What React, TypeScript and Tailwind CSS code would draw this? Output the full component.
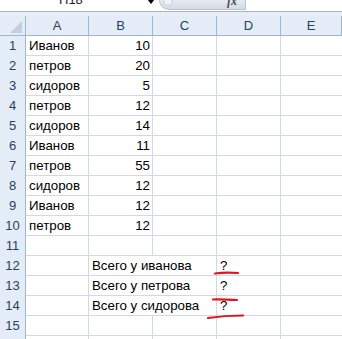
const rows: [string, string][] = [
  ["Иванов", "10"],
  ["петров", "20"],
  ["сидоров", "5"],
  ["петров", "12"],
  ["сидоров", "14"],
  ["Иванов", "11"],
  ["петров", "55"],
  ["сидоров", "12"],
  ["Иванов", "12"],
  ["петров", "12"],
];

const totals: Record<number, string> = {
  12: "Всего у иванова",
  13: "Всего у петрова",
  14: "Всего у сидорова",
};

const cols = ["A", "B", "C", "D", "E"];
const grid = "grid grid-cols-[26px_63px_64px_64px_64px_1fr]";

function FormulaBar() {
  return (
    <div className="h-[16px] bg-[#e9eef6] relative">
      <div className="h-[12px] bg-white border-b border-[#a7b5c8] flex items-start">
        <div className="w-[147px] relative h-full">
          <span className="absolute left-[59px] -top-[7px] text-[13px] leading-[14px] text-[#222]">H18</span>
          <span className="absolute left-[147px] -top-[1px] w-0 h-0 border-x-[4px] border-x-transparent border-t-[5px] border-t-black" />
        </div>
        <div className="ml-[12px] w-[87px] h-[10px] rounded-bl-[10px] bg-gradient-to-b from-[#e7ebf1] to-[#d3dbe6] border-b border-l border-r border-[#b9c4d3] relative">
          <span className="absolute left-[3px] -top-[4px] w-[10px] h-[10px] rounded-full border border-[#c8d0db] bg-[#eef1f5]" />
          <span className="absolute left-[67px] -top-[6px] text-[12px] leading-[14px] italic font-bold text-[#4a4a4a] font-['Liberation_Serif',serif]">fx</span>
        </div>
        <div className="flex-1 h-full" />
      </div>
    </div>
  );
}

function HeaderRow() {
  return (
    <div className={`${grid} h-[20px] bg-[#e4ecf7] border-b border-[#9eb6ce]`}>
      <div className="border-r border-[#9eb6ce] relative">
        <span className="absolute right-[3px] bottom-[3px] w-0 h-0 border-l-[12px] border-l-transparent border-b-[12px] border-b-[#c3cfdf]" />
      </div>
      {cols.map((c) => (
        <div
          key={c}
          className="border-r border-[#9eb6ce] flex items-center justify-center text-[13px] text-[#27415f]"
        >
          {c}
        </div>
      ))}
    </div>
  );
}

function Row({ n }: { n: number }) {
  const data = rows[n - 1];
  const total = totals[n];
  return (
    <div className={`${grid} h-[20px] border-b border-[#d4d9e1] text-[13.3px] text-black`}>
      <div className="bg-[#e4ecf7] border-r border-[#9eb6ce] flex items-center justify-center text-[13px] text-[#27415f] -mb-px border-b border-b-[#9eb6ce]">
        {n}
      </div>
      <div className="border-r border-[#d4d9e1] pl-[3px] flex items-center whitespace-nowrap">
        {data ? data[0] : ""}
      </div>
      <div
        className={`pr-[2px] flex items-center whitespace-nowrap ${
          total ? "" : "border-r border-[#d4d9e1] justify-end"
        } ${total ? "pl-[3px] overflow-visible relative z-10" : ""}`}
      >
        {data ? data[1] : total ?? ""}
      </div>
      <div className="border-r border-[#d4d9e1] border-l-0" />
      <div className="border-r border-[#d4d9e1] pl-[3px] flex items-center">
        {total ? "?" : ""}
      </div>
      <div />
    </div>
  );
}

function RedMarks() {
  return (
    <svg className="absolute left-0 top-0 pointer-events-none" width="342" height="339">
      <path d="M215 273.5 C222 272.5 230 272.5 238 273" stroke="#e0141e" strokeWidth="2.2" fill="none" strokeLinecap="round" />
      <path d="M213 299.5 C220 299 229 300 237 300" stroke="#e0141e" strokeWidth="2.2" fill="none" strokeLinecap="round" />
      <path d="M208 318 C218 316.5 232 315.5 243 315.5" stroke="#e0141e" strokeWidth="2.2" fill="none" strokeLinecap="round" />
    </svg>
  );
}

export default function App() {
  return (
    <div className="w-[342px] h-[339px] overflow-hidden bg-white relative font-['Liberation_Sans',Arial,sans-serif]">
      <FormulaBar />
      <HeaderRow />
      {Array.from({ length: 16 }, (_, i) => (
        <Row key={i + 1} n={i + 1} />
      ))}
      <RedMarks />
    </div>
  );
}
